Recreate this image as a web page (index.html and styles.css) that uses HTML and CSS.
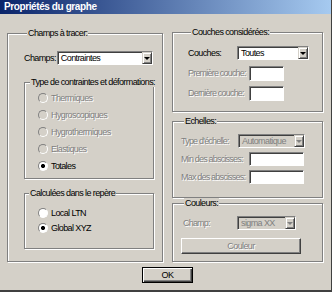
FILE: index.html
```html
<!DOCTYPE html>
<html lang="fr">
<head>
  <meta charset="UTF-8">
  <title>Propriétés du graphe</title>
  <link rel="stylesheet" href="styles.css">
</head>
<body>

<div class="dialog">
  <div class="titlebar">Propriétés du graphe</div>

  <div class="columns">
    <fieldset class="group left">
      <legend>Champs à tracer:</legend>
      <div class="champs">
        <span class="lab">Champs:</span>
        <div class="combo c-champs"><span>Contraintes</span><i class="arrow"></i></div>
      </div>

      <fieldset class="group inner types">
        <legend>Type de contraintes et déformations:</legend>
        <label class="radio off"><i class="dot"></i>Thermiques</label>
        <label class="radio off"><i class="dot"></i>Hygroscopiques</label>
        <label class="radio off"><i class="dot"></i>Hygrothermiques</label>
        <label class="radio off"><i class="dot"></i>Elastiques</label>
        <label class="radio on"><i class="dot"></i>Totales</label>
      </fieldset>

      <fieldset class="group inner repere">
        <legend>Calculées dans le repère</legend>
        <label class="radio"><i class="dot"></i>Local LTN</label>
        <label class="radio on"><i class="dot"></i>Global XYZ</label>
      </fieldset>
    </fieldset>

    <div class="right">
      <fieldset class="group couches">
        <legend>Couches considérées:</legend>
        <div class="row">
          <span class="lab w49">Couches:</span>
          <div class="combo c-couches"><span>Toutes</span><i class="arrow"></i></div>
        </div>
        <div class="row">
          <span class="lab w61 off">Première couche:</span>
          <div class="field f-couche"></div>
        </div>
        <div class="row">
          <span class="lab w61 off">Dernière couche:</span>
          <div class="field f-couche"></div>
        </div>
      </fieldset>

      <fieldset class="group echelles">
        <legend>Echelles:</legend>
        <div class="row">
          <span class="lab w57 off">Type d'échelle:</span>
          <div class="combo disabled c-echelle"><span>Automatique</span><i class="arrow"></i></div>
        </div>
        <div class="row">
          <span class="lab w68 off">Min des abscisses:</span>
          <div class="field f-abs"></div>
        </div>
        <div class="row">
          <span class="lab w68 off">Max des abscisses:</span>
          <div class="field f-abs"></div>
        </div>
      </fieldset>

      <fieldset class="group couleurs">
        <legend>Couleurs:</legend>
        <div class="row short">
          <span class="lab w56 off">Champ:</span>
          <div class="combo disabled c-couleur"><span>sigma XX</span><i class="arrow"></i></div>
        </div>
        <button class="btn couleur" disabled>Couleur</button>
      </fieldset>
    </div>
  </div>

  <div class="footer">
    <button class="btn ok">OK</button>
  </div>
</div>

</body>
</html>
```

FILE: styles.css
```css
body {
  margin: 0;
  background: #d4d0c8;
  font-family: "Liberation Sans", Arial, sans-serif;
  font-size: 9px;
  letter-spacing: -0.6px;
  color: #000;
}

.dialog {
  width: 332px;
  height: 292px;
  box-sizing: border-box;
  background: #d4d0c8;
  border-right: 1px solid #404040;
  border-bottom: 2px solid #404040;
}

.titlebar {
  height: 14px;
  line-height: 14px;
  padding-left: 4px;
  color: #fff;
  font-weight: bold;
  font-size: 10px;
  letter-spacing: -0.4px;
  background: linear-gradient(to right, #0a246a, #a6caf0);
}

.columns {
  display: flex;
  gap: 9px;
  padding: 14px 0 0 7px;
}

/* group boxes */
.group {
  margin: 0;
  padding: 0;
  min-width: 0;
  box-sizing: border-box;
  border: 1px solid #808080;
  box-shadow: inset 1px 1px #fff, 1px 1px #fff;
}

.group legend {
  margin-left: 3px;
  padding: 0 1px;
  line-height: 10px;
  white-space: nowrap;
  background: #d4d0c8;
}

.left {
  width: 156px;
  height: 234px;
  padding-left: 16px;
}

.inner {
  width: 130px;
}

.types {
  height: 102px;
  margin-top: 12px;
  padding: 2px 0 0 0;
}

.types legend {
  margin-left: 5px;
}

.repere {
  height: 61px;
  margin-top: 9px;
  padding: 7px 0 0 0;
}

.repere legend {
  margin-left: 4px;
}

.inner .radio {
  margin-left: 13px;
}

.champs {
  display: flex;
  align-items: center;
  gap: 1px;
  margin-top: 13px;
  padding-right: 9px;
}

.c-champs {
  flex: 1;
}

.lab {
  white-space: nowrap;
}

.right {
  width: 151px;
  margin-top: -1px;
}

.couches {
  height: 85px;
  padding: 6px 0 0 15px;
}

.echelles {
  height: 82px;
  margin-top: 4px;
  padding: 6px 0 0 8px;
}

.couleurs {
  height: 64px;
  padding: 8px 0 0 8px;
}

.row {
  display: flex;
  align-items: center;
  height: 20px;
}

.echelles .row {
  height: 18px;
}

.row.short {
  height: 14px;
}

.couleurs .lab {
  padding-left: 2px;
  box-sizing: border-box;
}

.w49 { width: 49px; }
.w56 { width: 56px; }
.w57 { width: 57px; }
.w61 { width: 61px; }
.w68 { width: 68px; }

.off {
  color: #808080;
  text-shadow: 1px 1px 0 #fff;
}

.lab.off {
  letter-spacing: -0.8px;
}

/* radio buttons */
.radio {
  display: flex;
  align-items: center;
  height: 17px;
  white-space: nowrap;
}

.repere .radio {
  height: 15px;
}

.dot {
  width: 8px;
  height: 8px;
  margin-right: 3px;
  border: 1px solid;
  border-color: #808080 #fff #fff #808080;
  border-radius: 50%;
  background: #fff;
}

.radio.off .dot {
  background: #d4d0c8;
}

.radio.on .dot {
  background: radial-gradient(circle, #000 0 1.8px, #fff 2.3px);
}

/* combo boxes and fields */
.combo, .field {
  box-sizing: border-box;
  height: 14px;
  background: #fff;
  border: 1px solid;
  border-color: #808080 #fff #fff #808080;
  box-shadow: inset 1px 1px #404040;
}

.combo {
  display: flex;
}

.combo span {
  flex: 1;
  padding: 1px 0 0 3px;
  line-height: 11px;
  white-space: nowrap;
  overflow: hidden;
}

.combo .arrow {
  display: flex;
  align-items: center;
  justify-content: center;
  width: 10px;
  box-sizing: border-box;
  border: 1px solid;
  border-color: #d4d0c8 #404040 #404040 #d4d0c8;
  box-shadow: inset 1px 1px #fff, inset -1px -1px #808080;
  background: #d4d0c8;
}

.combo .arrow::after {
  content: "";
  border-left: 3px solid transparent;
  border-right: 3px solid transparent;
  border-top: 3px solid #000;
}

.combo.disabled {
  background: #d4d0c8;
  color: #808080;
}

.combo.disabled .arrow::after {
  border-top-color: #808080;
}

.c-couches { width: 72px; }
.c-echelle { width: 67px; }
.c-couleur { width: 59px; }

.f-couche {
  width: 35px;
  height: 15px;
}

.f-abs {
  width: 55px;
}

/* push buttons */
.btn {
  font: inherit;
  letter-spacing: inherit;
  height: 16px;
  padding: 0;
  background: #d4d0c8;
  border: 1px solid;
  border-color: #fff #404040 #404040 #fff;
  box-shadow: inset -1px -1px #808080;
}

.btn:disabled {
  color: #808080;
  text-shadow: 1px 1px 0 #fff;
}

.couleur {
  display: block;
  width: 120px;
  margin-top: 8px;
}

.footer {
  display: flex;
  justify-content: center;
  padding: 5px 0 0 4px;
}

.ok {
  width: 51px;
  border-color: #000;
  box-shadow: inset 1px 1px #fff, inset -1px -1px #404040, inset -2px -2px #808080;
}
```
